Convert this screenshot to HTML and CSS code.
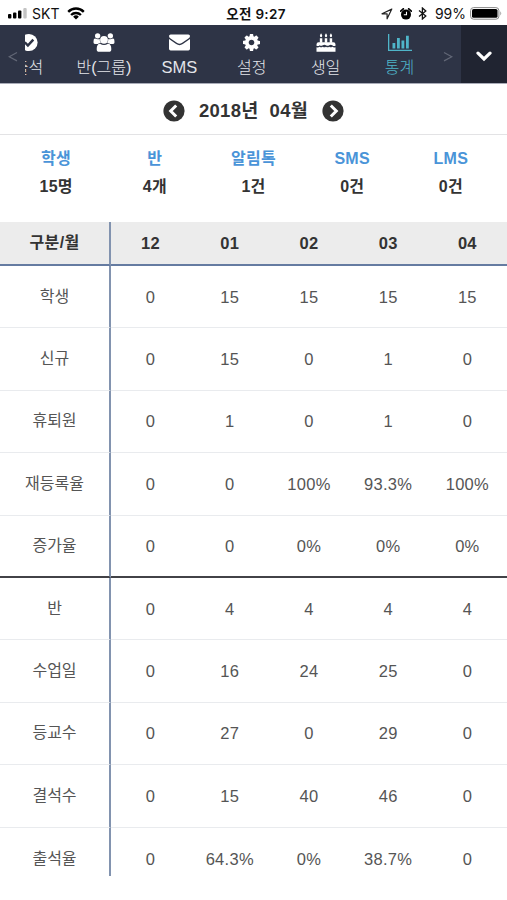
FILE: index.html
```html
<!DOCTYPE html>
<html lang="ko">
<head>
    <meta charset="UTF-8">
    <meta name="viewport" content="width=device-width, initial-scale=1.0">
    <title>통계</title>
    <link rel="stylesheet" href="styles.css">
</head>
<body>
    <header class="status-bar">
        <div class="status-left">
            <svg class="signal" viewBox="0 0 19 11"><rect x="0" y="6" width="3.4" height="4.5" rx="1"/><rect x="5" y="4.5" width="3.4" height="6" rx="1"/><rect x="10" y="2.5" width="3.4" height="8" rx="1"/><rect x="15.3" y="0" width="3.4" height="10.5" rx="1" fill="#c4c4c4"/></svg>
            <span class="carrier">SKT</span>
            <svg class="wifi" viewBox="0 0 18 13"><g fill="none" stroke="#000" stroke-width="2.4"><path d="M1.2 4.8a11 11 0 0 1 15.6 0"/><path d="M4.1 8a7 7 0 0 1 9.8 0"/></g><path d="M9 12.6 6.1 9.7a4.1 4.1 0 0 1 5.8 0z"/></svg>
        </div>
        <div class="status-time">오전 9:27</div>
        <div class="status-right">
            <svg class="locate" viewBox="0 0 12 12"><path d="M10.8 1.1 1 5.8h5.1v5z" fill="none" stroke="#222" stroke-width="1.2" stroke-linejoin="round"/></svg>
            <svg class="alarm" viewBox="0 0 12 12"><circle cx="6" cy="6.6" r="5"/><path d="M.7 3.2 3.3.8M11.3 3.2 8.7.8" stroke="#000" stroke-width="1.7" stroke-linecap="round"/><path d="M6.5 3.7v3.1H3.8" fill="none" stroke="#fff" stroke-width="1.1"/></svg>
            <svg class="bluetooth" viewBox="0 0 9 13"><path d="M1 3.6 7.8 9 4.4 12V1l3.4 3L1 9.4" fill="none" stroke="#111" stroke-width="1.3"/></svg>
            <span class="percent">99%</span>
            <svg class="battery" viewBox="0 0 32 13"><rect x=".6" y=".6" width="28.3" height="11.6" rx="3" fill="none" stroke="#888"/><rect x="2" y="2" width="25.5" height="8.8" rx="1.6"/><path d="M30.3 4.3q1.8 2.1 0 4.2z" fill="#999"/></svg>
        </div>
    </header>

    <nav class="menu">
        <div class="menu-arrow prev"><svg viewBox="0 0 10 12" width="10" height="12"><path d="M9 1.5 1.2 5.7 9 9.9"/></svg></div>
        <div class="menu-scroll">
            <a class="menu-item first">
                <svg viewBox="0 0 18 18" width="18" height="18"><circle cx="9" cy="9" r="8.6"/><path d="m4.8 8.8 3.1 3.2 5.4-5.8" fill="none" stroke="#2e3446" stroke-width="2.5"/></svg>
                <span>출석</span>
            </a>
            <a class="menu-item">
                <svg viewBox="0 0 22 20" width="22" height="20"><circle cx="4.3" cy="3" r="2.8"/><circle cx="17.7" cy="3" r="2.8"/><path d="M0 10.2V8.4q0-2.6 1.6-2.6 2.7 1.3 4.9.4-.2 2.7 1.2 4.2-2.1 0-3.2 1.3H2Q0 11.7 0 10.2zM22 10.2V8.4q0-2.6-1.6-2.6-2.7 1.3-4.9.4.2 2.7-1.2 4.2 2.1 0 3.2 1.3H20q2 0 2-1.5z"/><circle cx="11" cy="7.2" r="4.1"/><path d="M3.3 17q0-5.8 3.5-5.8 4.2 2.7 8.4 0 3.5 0 3.5 5.8 0 2.8-2.7 2.8H6q-2.7 0-2.7-2.8z"/></svg>
                <span>반(그룹)</span>
            </a>
            <a class="menu-item sms">
                <svg viewBox="0 0 21 17" width="21" height="17"><path d="M0 2Q0 .4 1.7.4h17.6Q21 .4 21 2q0 1.5-1.6 2.6l-6.6 4.5q-2.3 1.5-4.6 0L1.6 4.6Q0 3.5 0 2zM0 5l7.2 5.1q3.3 2.1 6.6 0L21 5v9.7q0 1.8-1.7 1.8H1.7Q0 16.5 0 14.7z"/></svg>
                <span>SMS</span>
            </a>
            <a class="menu-item">
                <svg viewBox="128 128 1536 1536" width="17" height="17"><path d="M1152 896q0-106-75-181t-181-75-181 75-75 181 75 181 181 75 181-75 75-181zm512-109v222q0 12-8 23t-20 13l-185 28q-19 54-39 91 35 50 107 138 10 12 10 25t-9 23q-27 37-99 108t-94 71q-12 0-26-9l-138-108q-44 23-91 38-16 136-29 186-7 28-36 28h-222q-14 0-24.5-8.5t-11.5-21.5l-28-184q-49-16-90-37l-141 107q-10 9-25 9-14 0-25-11-126-114-165-168-7-10-7-23 0-12 8-23 15-21 51-66.5t54-70.5q-27-50-41-99l-183-27q-13-2-21-12.5t-8-23.5v-222q0-12 8-23t19-13l186-28q14-46 39-92-40-57-107-138-10-12-10-24 0-10 9-23 26-36 98.5-107.5t94.5-71.5q13 0 26 10l138 107q44-23 91-38 16-136 29-186 7-28 36-28h222q14 0 24.5 8.5t11.5 21.5l28 184q49 16 90 37l142-107q9-9 24-9 13 0 25 10 129 119 165 170 7 8 7 22 0 12-8 23-15 21-51 66.5t-54 70.5q26 50 41 98l183 28q13 2 21 12.5t8 23.5z"/></svg>
                <span>설정</span>
            </a>
            <a class="menu-item">
                <svg viewBox="0 0 20 20" width="20" height="20"><path d="M3.5 5.5h2.6v4.8H3.5zM8.7 5.5h2.6v4.8H8.7zM13.9 5.5h2.6v4.8h-2.6zM4.8.2q2.5 3.2 0 4.4-2.5-1.2 0-4.4zM10 .2q2.5 3.2 0 4.4-2.5-1.2 0-4.4zM15.2.2q2.5 3.2 0 4.4-2.5-1.2 0-4.4z"/><path d="M0 13.4V12q0-2.2 2.2-2.2h15.6Q20 9.8 20 12v1.4q-1.7 1-3.4-.5-1.6-1.2-3.2 0-1.7 1.3-3.4 0-1.7-1.3-3.4 0-1.7 1.3-3.3 0-1.6 1.5-3.3.5zM0 14.9q1.7.7 3.3-.5 1.6 1.3 3.3 0 1.7 1.3 3.4 0 1.7 1.3 3.4 0 1.6 1.3 3.2 0 1.7 1.2 3.4.5v4.8H0z"/></svg>
                <span>생일</span>
            </a>
            <a class="menu-item active">
                <svg viewBox="0 0 24 18" width="24" height="18"><path d="M0 .5h1.3v15.8H24v1.3H0zM4.5 9.5h2.8v5.6H4.5zM9 4.5h2.8v10.6H9zM13.5 7h2.8v8.1h-2.8zM18 2.3h2.8v12.8H18z"/></svg>
                <span>통계</span>
            </a>
        </div>
        <div class="menu-arrow next"><svg viewBox="0 0 10 12" width="10" height="12"><path d="m1 1.5 7.8 4.2L1 9.9"/></svg></div>
        <div class="menu-toggle">
            <svg viewBox="0 0 16 11" width="16" height="11"><path d="m2 2.2 6 5.8 6-5.8" fill="none" stroke="#fff" stroke-width="3.2" stroke-linecap="round"/></svg>
        </div>
    </nav>

    <div class="month">
        <svg viewBox="0 0 22 22"><circle cx="11" cy="11" r="10.6"/><path d="M13.2 5.5 7.7 11l5.5 5.5" fill="none" stroke="#fff" stroke-width="3"/></svg>
        <h1><span>2018년</span><span>04월</span></h1>
        <svg viewBox="0 0 22 22"><circle cx="11" cy="11" r="10.6"/><path d="m8.8 5.5 5.5 5.5-5.5 5.5" fill="none" stroke="#fff" stroke-width="3"/></svg>
    </div>

    <dl class="summary">
        <div><dt>학생</dt><dd>15명</dd></div>
        <div><dt>반</dt><dd>4개</dd></div>
        <div><dt>알림톡</dt><dd>1건</dd></div>
        <div><dt>SMS</dt><dd>0건</dd></div>
        <div><dt>LMS</dt><dd>0건</dd></div>
    </dl>

    <div class="stats-wrap">
        <table class="stats">
            <thead>
                <tr><th>구분/월</th><th>12</th><th>01</th><th>02</th><th>03</th><th>04</th></tr>
            </thead>
            <tbody>
                <tr><th>학생</th><td>0</td><td>15</td><td>15</td><td>15</td><td>15</td></tr>
                <tr><th>신규</th><td>0</td><td>15</td><td>0</td><td>1</td><td>0</td></tr>
                <tr><th>휴퇴원</th><td>0</td><td>1</td><td>0</td><td>1</td><td>0</td></tr>
                <tr><th>재등록율</th><td>0</td><td>0</td><td>100%</td><td>93.3%</td><td>100%</td></tr>
                <tr class="group-end"><th>증가율</th><td>0</td><td>0</td><td>0%</td><td>0%</td><td>0%</td></tr>
                <tr><th>반</th><td>0</td><td>4</td><td>4</td><td>4</td><td>4</td></tr>
                <tr><th>수업일</th><td>0</td><td>16</td><td>24</td><td>25</td><td>0</td></tr>
                <tr><th>등교수</th><td>0</td><td>27</td><td>0</td><td>29</td><td>0</td></tr>
                <tr><th>결석수</th><td>0</td><td>15</td><td>40</td><td>46</td><td>0</td></tr>
                <tr><th>출석율</th><td>0</td><td>64.3%</td><td>0%</td><td>38.7%</td><td>0</td></tr>
            </tbody>
        </table>
    </div>
</body>
</html>
```

FILE: styles.css
```css
* {
    box-sizing: border-box;
}
body {
    margin: 0;
    height: 900px;
    overflow: hidden;
    background: #fff;
    color: #333;
    font-family: "Liberation Sans", "Noto Sans CJK KR", sans-serif;
    font-size: 16px;
}

/* status bar */
.status-bar {
    display: grid;
    grid-template-columns: 1fr auto 1fr;
    align-items: center;
    height: 25px;
    padding: 2px 5px 0 8px;
    color: #111;
    font-family: Inter, "Noto Sans CJK KR", sans-serif;
    font-size: 14px;
    line-height: 20px;
}
.status-left, .status-right {
    display: flex;
    align-items: center;
}
.status-right {
    justify-content: flex-end;
}
.signal { width: 19px; height: 11px; }
.carrier { margin: 0 8px 0 5px; }
.wifi { width: 18px; height: 13px; }
.status-time {
    padding-left: 2px;
    font-size: 13.5px;
    font-weight: 600;
    letter-spacing: 0.3px;
}
.locate { width: 12px; height: 12px; margin-right: 7px; }
.alarm { width: 12px; height: 12px; margin-right: 6px; }
.bluetooth { width: 9px; height: 13px; margin-right: 8px; }
.percent { margin-right: 4px; }
.battery { width: 32px; height: 13px; }

/* menu */
.menu {
    display: flex;
    height: 59px;
    background: #2e3446;
    border-bottom: 1px solid #a9acb8;
    color: #e4e5ea;
}
.menu-arrow {
    display: flex;
    flex: none;
    align-items: center;
    justify-content: center;
    width: 25px;
    padding-top: 5px;
}
.menu-arrow.next {
    width: 26px;
}
.menu-arrow path {
    fill: none;
    stroke: #626776;
    stroke-width: 1.2;
}
.menu-scroll {
    display: flex;
    width: 410px;
    overflow: hidden;
}
.menu-item {
    display: flex;
    flex: none;
    flex-direction: column;
    align-items: center;
    width: 73.9px;
    height: 58px;
}
.menu-item.first {
    width: 77px;
    margin-left: -35px;
}
.menu-item.sms {
    padding-left: 3px;
}
.menu-item svg {
    height: 19px;
    margin-top: 8px;
    fill: #fff;
}
.menu-item span {
    margin-top: 5px;
    font-size: 16px;
    font-weight: 300;
    line-height: 22px;
    white-space: nowrap;
}
.menu-item.sms span {
    margin-top: 4px;
    font-size: 16.5px;
}
.menu-item.active {
    color: #4fb5c9;
}
.menu-item.active svg {
    fill: #4fb5c9;
}
.menu-toggle {
    display: flex;
    flex: 1;
    align-items: center;
    justify-content: center;
    padding-top: 4px;
    background: #202431;
}

/* month */
.month {
    display: flex;
    align-items: center;
    justify-content: center;
    gap: 14px;
    height: 51px;
    padding-top: 3px;
    border-bottom: 1px solid #e3e3e5;
}
.month svg {
    width: 22px;
    height: 22px;
    fill: #333;
}
.month h1 {
    display: flex;
    gap: 11px;
    margin: 0;
    font-size: 18.5px;
    letter-spacing: 0.3px;
    line-height: 24px;
}

/* summary */
.summary {
    display: grid;
    grid-template-columns: repeat(5, 98.7px);
    justify-content: center;
    height: 87px;
    margin: 0;
    padding-top: 12px;
    font-weight: bold;
    text-align: center;
}
.summary dt {
    color: #4a94d8;
    letter-spacing: 0.3px;
    line-height: 24px;
}
.summary dd {
    margin: 4px 0 0;
    letter-spacing: 0.2px;
    line-height: 24px;
}

/* stats table */
.stats-wrap {
    height: 654px;
    overflow: hidden;
}
.stats {
    width: 507px;
    table-layout: fixed;
    border-collapse: separate;
    border-spacing: 0;
    text-align: center;
}
.stats th, .stats td {
    height: 62.4px;
    padding: 0;
    border-bottom: 1px solid #e9ebee;
    color: #555;
    font-weight: normal;
    line-height: 24px;
}
.stats td {
    font-size: 16.5px;
    letter-spacing: 0.3px;
}
.stats th:first-child {
    width: 111px;
    border-right: 2px solid #8293af;
}
.stats thead th {
    height: 44px;
    background: #ececec;
    border-bottom: 2px solid #657ba1;
    color: #333;
    font-size: 16.5px;
    font-weight: bold;
    letter-spacing: 0.3px;
}
.stats thead th:first-child {
    font-size: 16px;
}
.stats .group-end th, .stats .group-end td {
    border-bottom: 2px solid #424247;
}
.stats tbody tr:last-child > * {
    border-bottom: 0;
}
```
